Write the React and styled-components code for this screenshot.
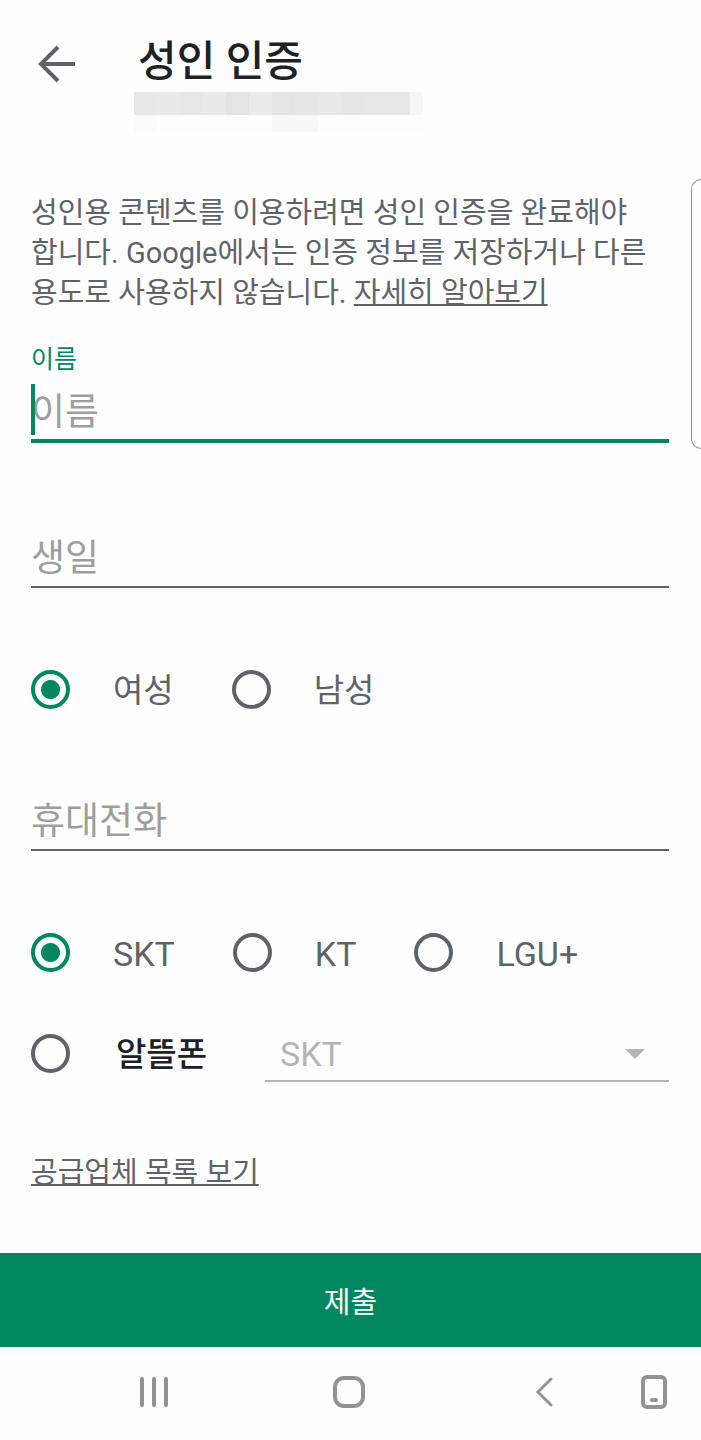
import React, { useState } from "react";
import styled, { createGlobalStyle } from "styled-components";

const GREEN = "#01875f";
const GREY = "#5f6368";

const GlobalStyle = createGlobalStyle`
  * {
    box-sizing: border-box;
  }
  body {
    margin: 0;
    background: #fefefe;
    color: ${GREY};
    font-family: Roboto, "Noto Sans CJK KR", sans-serif;
  }
  input,
  select,
  button {
    font-family: inherit;
  }
`;

const Page = styled.div`
  position: relative;
  display: flex;
  flex-direction: column;
  min-height: 100vh;
`;
const Header = styled.header`
  display: flex;
  align-items: flex-start;
  gap: 54px;
  padding: 32px 32px 0 34px;
`;
const IconButton = styled.button`
  display: flex;
  align-items: center;
  justify-content: center;
  padding: 0;
  border: 0;
  background: none;
  color: ${(props) => props.$color || "#939393"};
`;
const BackButton = styled(IconButton)`
  width: 46px;
  height: 64px;
`;
const Title = styled.h1`
  margin: 0;
  padding-left: 4px;
  font-size: 42px;
  line-height: 60px;
  font-weight: 500;
  color: #202124;
`;
const Account = styled.svg`
  display: block;
`;
const Form = styled.form`
  display: flex;
  flex: 1;
  flex-direction: column;
`;
const Content = styled.div`
  flex: 1;
  padding: 61px 32px 0 31px;
`;
const Intro = styled.p`
  margin: 0;
  font-size: 29px;
  line-height: 40px;
  word-break: keep-all;
`;
const Link = styled.a`
  color: inherit;
  font-size: 29px;
  line-height: 40px;
  text-decoration: underline;
  text-decoration-thickness: 2px;
  text-underline-offset: 1px;
  text-decoration-skip-ink: none;
`;
const Field = styled.div`
  display: flex;
  flex-direction: column;
  margin-top: ${(props) => props.$gap}px;
`;
const FieldLabel = styled.label`
  height: 36px;
  font-size: 25px;
  line-height: 38px;
  color: ${GREEN};
  visibility: ${(props) => (props.$shown ? "visible" : "hidden")};
`;
const TextInput = styled.input`
  width: 100%;
  height: 66px;
  padding: 9px 0 0;
  border: 0;
  border-bottom: 2px solid ${GREY};
  border-radius: 0;
  outline: 0;
  background: none;
  font-size: 37px;
  color: #202124;
  caret-color: ${GREEN};
  &::placeholder {
    color: #9e9e9e;
    opacity: 1;
  }
`;
const ActiveBox = styled.div`
  position: relative;
  ${TextInput} {
    border-bottom: 4px solid ${GREEN};
    caret-color: transparent;
  }
`;
const Caret = styled.span`
  position: absolute;
  left: 0;
  bottom: 8px;
  width: 4px;
  height: 51px;
  background: ${GREEN};
`;
const RadioRow = styled.div`
  display: flex;
  align-items: center;
  gap: 58px;
  height: 60px;
  margin-top: ${(props) => props.$gap}px;
`;
const RadioLabel = styled.label`
  display: flex;
  align-items: center;
  gap: ${(props) => (props.$dark ? 46 : 43)}px;
  font-size: ${(props) => (props.$latin ? 34 : 33)}px;
  font-weight: ${(props) => (props.$dark ? 500 : 400)};
  line-height: 48px;
  white-space: nowrap;
  color: ${(props) => (props.$dark ? "#202124" : GREY)};
`;
const RadioText = styled.span`
  padding-top: 3px;
`;
const Radio = styled.input`
  appearance: none;
  flex: none;
  width: 39px;
  height: 39px;
  margin: 0;
  border: 4px solid ${GREY};
  border-radius: 50%;
  &:checked {
    border-color: ${GREEN};
    background: radial-gradient(circle, ${GREEN} 9px, transparent 10px);
  }
`;
const SelectBox = styled.div`
  display: flex;
  flex: 1;
  align-items: center;
  height: 58px;
  padding: 4px 24px 0 0;
  border-bottom: 2px solid #b4b4b4;
  color: #b4b4b4;
`;
const Select = styled.select`
  appearance: none;
  flex: 1;
  padding: 0 0 0 15px;
  border: 0;
  background: none;
  font-size: 34px;
  color: #b4b4b4;
  opacity: 1;
`;
const Providers = styled.div`
  margin-top: 70px;
`;
const Submit = styled.button`
  height: 94px;
  padding: 0;
  border: 0;
  background: ${GREEN};
  color: #fff;
  font-size: 29px;
`;
const NavBar = styled.nav`
  display: grid;
  grid-template-columns: 28fr 28fr 28fr 1fr;
  align-items: center;
  height: 93px;
  padding: 0 34px 4px 56px;
`;
const EdgeHandle = styled.div`
  position: absolute;
  top: 179px;
  right: 0;
  width: 10px;
  height: 270px;
  border: 1px solid #909090;
  border-right: 0;
  border-radius: 10px 0 0 10px;
`;

// [x, width, colour] of the masked account name
const MASK = [
  [0, 23, "#e8e8e8"],
  [23, 23, "#e9e9e9"],
  [46, 23, "#e7e7e7"],
  [69, 23, "#e9e9e9"],
  [92, 23, "#e4e4e4"],
  [115, 23, "#ebebeb"],
  [138, 23, "#e4e4e4"],
  [161, 23, "#e6e6e6"],
  [184, 23, "#e8e8e8"],
  [207, 23, "#e6e6e6"],
  [230, 23, "#e7e7e7"],
  [253, 23, "#e7e7e7"],
  [276, 13, "#f7f7f7"],
];

const RadioOption = ({ name, value, selected, onSelect, latin, dark }) => (
  <RadioLabel $latin={latin} $dark={dark}>
    <Radio
      type="radio"
      name={name}
      checked={selected === value}
      onChange={() => onSelect(value)}
    />
    <RadioText>{value}</RadioText>
  </RadioLabel>
);

const App = () => {
  const [gender, setGender] = useState("여성");
  const [carrier, setCarrier] = useState("SKT");
  const [name, setName] = useState("");

  return (
    <Page>
      <GlobalStyle />
      <Header>
        <BackButton type="button" aria-label="뒤로" $color={GREY}>
          <svg width="38" height="38" viewBox="0 0 38 38" fill="none">
            <path
              d="M37 19H4M20 2L3 19L20 36"
              stroke="currentColor"
              strokeWidth="4"
            />
          </svg>
        </BackButton>
        <div>
          <Title>성인 인증</Title>
          <Account width="289" height="40" aria-hidden="true">
            {MASK.map(([x, width, fill]) => (
              <rect key={x} x={x} width={width} height="23" fill={fill} />
            ))}
            <rect y="23" width="23" height="17" fill="#fbfbfb" />
            <rect x="23" y="23" width="266" height="17" fill="#fdfdfd" />
            <rect x="138" y="23" width="46" height="17" fill="#f8f8f8" />
          </Account>
        </div>
      </Header>
      <Form onSubmit={(e) => e.preventDefault()}>
        <Content>
          <Intro>
            성인용 콘텐츠를 이용하려면 성인 인증을 완료해야 합니다. Google에서는
            인증 정보를 저장하거나 다른 용도로 사용하지 않습니다.{" "}
            <Link href="#learn">자세히 알아보기</Link>
          </Intro>
          <Field $gap={28}>
            <FieldLabel htmlFor="name" $shown>
              이름
            </FieldLabel>
            <ActiveBox>
              <TextInput
                id="name"
                placeholder="이름"
                value={name}
                onChange={(e) => setName(e.target.value)}
              />
              {name === "" && <Caret />}
            </ActiveBox>
          </Field>
          <Field $gap={43}>
            <FieldLabel htmlFor="birthday">생일</FieldLabel>
            <TextInput id="birthday" placeholder="생일" />
          </Field>
          <RadioRow $gap={71}>
            {["여성", "남성"].map((value) => (
              <RadioOption
                key={value}
                name="gender"
                value={value}
                selected={gender}
                onSelect={setGender}
              />
            ))}
          </RadioRow>
          <Field $gap={30}>
            <FieldLabel htmlFor="phone">휴대전화</FieldLabel>
            <TextInput id="phone" type="tel" placeholder="휴대전화" />
          </Field>
          <RadioRow $gap={71}>
            {["SKT", "KT", "LGU+"].map((value) => (
              <RadioOption
                key={value}
                name="carrier"
                value={value}
                selected={carrier}
                onSelect={setCarrier}
                latin
              />
            ))}
          </RadioRow>
          <RadioRow $gap={41}>
            <RadioOption
              name="carrier"
              value="알뜰폰"
              selected={carrier}
              onSelect={setCarrier}
              dark
            />
            <SelectBox>
              <Select aria-label="알뜰폰 통신사" disabled={carrier !== "알뜰폰"}>
                <option>SKT</option>
                <option>KT</option>
                <option>LGU+</option>
              </Select>
              <svg width="20" height="10" viewBox="0 0 20 10">
                <path d="M0 0H20L10 10Z" fill="currentColor" />
              </svg>
            </SelectBox>
          </RadioRow>
          <Providers>
            <Link href="#providers">공급업체 목록 보기</Link>
          </Providers>
        </Content>
        <Submit type="submit">제출</Submit>
      </Form>
      <NavBar>
        <IconButton type="button" aria-label="최근 앱">
          <svg width="30" height="30" viewBox="0 0 30 30" fill="none">
            <path
              d="M3 2V28M15 2V28M27 2V28"
              stroke="currentColor"
              strokeWidth="4"
              strokeLinecap="round"
            />
          </svg>
        </IconButton>
        <IconButton type="button" aria-label="홈">
          <svg width="32" height="32" viewBox="0 0 32 32" fill="none">
            <rect
              x="2"
              y="2"
              width="28"
              height="28"
              rx="9"
              stroke="currentColor"
              strokeWidth="4"
            />
          </svg>
        </IconButton>
        <IconButton type="button" aria-label="이전">
          <svg width="18" height="30" viewBox="0 0 18 30" fill="none">
            <path
              d="M16 2L3 15L16 28"
              stroke="currentColor"
              strokeWidth="3"
              strokeLinecap="round"
            />
          </svg>
        </IconButton>
        <IconButton type="button" aria-label="화면 회전">
          <svg width="26" height="34" viewBox="0 0 26 34" fill="none">
            <rect
              x="2"
              y="2"
              width="22"
              height="30"
              rx="4"
              stroke="currentColor"
              strokeWidth="4"
            />
            <path
              d="M11 25H15"
              stroke="currentColor"
              strokeWidth="4"
              strokeLinecap="round"
            />
          </svg>
        </IconButton>
      </NavBar>
      <EdgeHandle />
    </Page>
  );
};

export default App;
